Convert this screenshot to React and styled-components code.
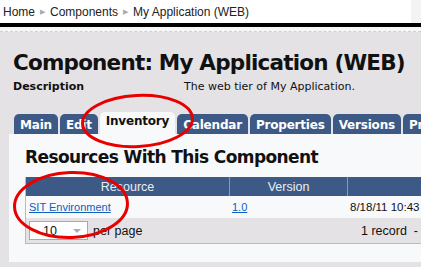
import React from 'react';
import styled, { createGlobalStyle } from 'styled-components';

const GlobalStyle = createGlobalStyle`
  html, body {
    margin: 0;
    padding: 0;
    background: #e4e2e5;
    overflow: hidden;
  }
  body {
    font-family: "DejaVu Sans", Verdana, sans-serif;
    color: #111;
  }
`;

const tabs = ['Main', 'Edit', 'Inventory', 'Calendar', 'Properties', 'Versions', 'Pr'];

const StyledPage = styled.div`
  position: relative;
  width: 421px;
  height: 267px;
  overflow: hidden;
`;

const StyledTopBar = styled.div`
  display: flex;
  background: #f3f3f3;
`;

const StyledCrumbs = styled.div`
  width: 408px;
  height: 23px;
  padding-left: 3px;
  background: #fff;
  display: flex;
  align-items: center;
  gap: 5px;
  font-family: "Liberation Sans", Arial, sans-serif;
  font-size: 12px;
  color: #222;
`;

const StyledArrow = styled.span`
  font-size: 7px;
  color: #aaa;
`;

const StyledRule = styled.div`
  height: 4px;
  background: #000;
`;

const StyledStrip = styled.div`
  height: 4px;
  background: #f6f6f6;
  border-bottom: 1px dashed #d0d0d0;
`;

const StyledHead = styled.div`
  padding: 18px 0 0 13px;
  width: 600px;
`;

const StyledTitle = styled.h1`
  margin: 0;
  font-size: 21.5px;
  letter-spacing: -0.8px;
  line-height: 26px;
  font-weight: bold;
  white-space: nowrap;
`;

const StyledDescRow = styled.div`
  display: grid;
  grid-template-columns: 171px 1fr;
  margin-top: 4px;
  font-size: 11px;
  line-height: 14px;
`;

const StyledLabel = styled.span`
  font-weight: bold;
`;

const StyledTabs = styled.div`
  display: flex;
  align-items: flex-end;
  gap: 2px;
  margin: 18px 0 0 14px;
  width: 600px;
  height: 22px;
`;

const StyledTab = styled.div`
  height: ${p => (p.active ? '22px' : '20px')};
  padding: 0 6px;
  border-radius: 5px 5px 0 0;
  background: ${p => (p.active ? '#f8f9fa' : '#3c5a85')};
  color: ${p => (p.active ? '#111' : '#fff')};
  font-size: 12px;
  letter-spacing: -0.2px;
  font-weight: bold;
  line-height: ${p => (p.active ? '19px' : '22px')};
  white-space: nowrap;
`;

const StyledPanel = styled.section`
  margin-left: 9px;
  width: 600px;
  height: 128px;
  background: #f8f9fa;
  padding: 12px 0 0 16px;
  box-sizing: border-box;
`;

const StyledPanelTitle = styled.h2`
  margin: 0 0 9px;
  font-size: 17px;
  letter-spacing: -0.6px;
  line-height: 22px;
  font-weight: bold;
`;

const StyledTable = styled.div`
  width: 560px;
  border: 1px solid #a9bedb;
  border-top: none;
  font-family: "Liberation Sans", Arial, sans-serif;
  font-size: 11px;
`;

const StyledRow = styled.div`
  display: grid;
  grid-template-columns: 203px 118px 1fr;
  height: ${p => p.h}px;
  align-items: center;
  background: ${p => p.bg || 'transparent'};
`;

const StyledTh = styled.div`
  height: 100%;
  display: flex;
  align-items: center;
  justify-content: center;
  color: #e8eef7;
  font-size: 12.5px;
  & + & {
    border-left: 1px solid #7f9cc6;
  }
`;

const StyledTd = styled.div`
  padding-left: 3px;
  font-size: ${p => (p.plain ? '11.5px' : '11px')};
`;

const StyledLink = styled.a`
  color: #0d5fc0;
  text-decoration: underline;
`;

const StyledFooter = styled.div`
  display: flex;
  align-items: center;
  height: 25px;
  background: #e4e2e5;
  padding-left: 3px;
`;

const StyledPager = styled.div`
  width: 332px;
  display: flex;
  align-items: center;
  gap: 5px;
  font-size: 12.5px;
`;

const StyledSelect = styled.div`
  width: 59px;
  height: 19px;
  border: 1px solid #93add0;
  background: #fff;
  display: flex;
  align-items: center;
  justify-content: space-between;
  padding: 0 6px 0 13px;
  box-sizing: border-box;
`;

const StyledCaret = styled.span`
  width: 0;
  height: 0;
  border-left: 4px solid transparent;
  border-right: 4px solid transparent;
  border-top: 4px solid #a6adba;
`;

const StyledRecords = styled.div`
  font-size: 12.5px;
  white-space: nowrap;
`;

const StyledMarks = styled.svg`
  position: absolute;
  top: 0;
  left: 0;
  pointer-events: none;
`;

const App = () => {
  return (
    <StyledPage>
      <GlobalStyle />
      <StyledTopBar>
        <StyledCrumbs>
          <span>Home</span>
          <StyledArrow>▶</StyledArrow>
          <span>Components</span>
          <StyledArrow>▶</StyledArrow>
          <span>My Application (WEB)</span>
        </StyledCrumbs>
      </StyledTopBar>
      <StyledRule />
      <StyledStrip />
      <StyledHead>
        <StyledTitle>Component: My Application (WEB)</StyledTitle>
        <StyledDescRow>
          <StyledLabel>Description</StyledLabel>
          <span>The web tier of My Application.</span>
        </StyledDescRow>
      </StyledHead>
      <StyledTabs>
        {tabs.map(name => (
          <StyledTab key={name} active={name === 'Inventory'}>{name}</StyledTab>
        ))}
      </StyledTabs>
      <StyledPanel>
        <StyledPanelTitle>Resources With This Component</StyledPanelTitle>
        <StyledTable>
          <StyledRow h={19} bg="#3c5a85">
            <StyledTh>Resource</StyledTh>
            <StyledTh>Version</StyledTh>
            <StyledTh />
          </StyledRow>
          <StyledRow h={22}>
            <StyledTd><StyledLink>SIT Environment</StyledLink></StyledTd>
            <StyledTd><StyledLink>1.0</StyledLink></StyledTd>
            <StyledTd plain>8/18/11 10:43 AM</StyledTd>
          </StyledRow>
          <StyledFooter>
            <StyledPager>
              <StyledSelect>
                <span>10</span>
                <StyledCaret />
              </StyledSelect>
              <span>per page</span>
            </StyledPager>
            <StyledRecords>
              1 record &nbsp;- &nbsp;<StyledLink>First</StyledLink>
            </StyledRecords>
          </StyledFooter>
        </StyledTable>
      </StyledPanel>
      <StyledMarks width="421" height="267" viewBox="0 0 421 267">
        <ellipse cx="137.5" cy="121" rx="55" ry="25.5" transform="rotate(-3 137.5 121)" fill="none" stroke="#e80000" strokeWidth="3" />
        <ellipse cx="71" cy="205" rx="56.5" ry="32.5" transform="rotate(-2 71 205)" fill="none" stroke="#e80000" strokeWidth="3" />
      </StyledMarks>
    </StyledPage>
  );
};

export default App;
